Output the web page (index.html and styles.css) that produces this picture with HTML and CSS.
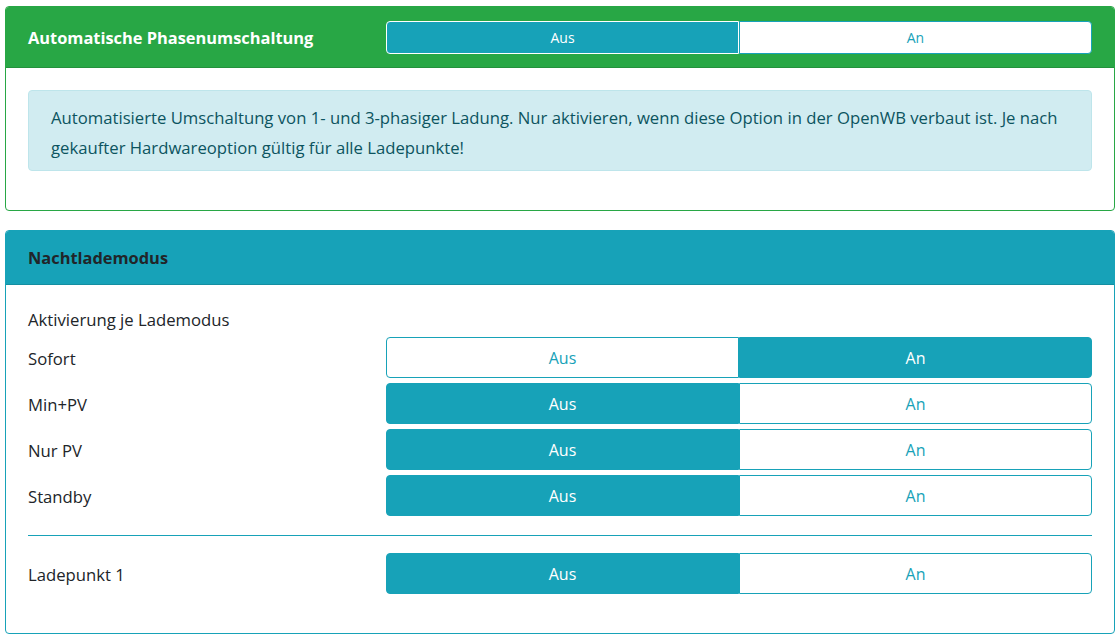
FILE: index.html
```html
<!DOCTYPE html>
<html lang="de">
<head>
    <meta charset="UTF-8">
    <meta name="viewport" content="width=device-width, initial-scale=1.0">
    <title>Ladeeinstellungen</title>
<link rel="stylesheet" href="styles.css">
</head>
<body>
    <div class="karte karte-gruen">
        <div class="kopf kopf-gruen">
            <div class="titel">Automatische Phasenumschaltung</div>
            <div class="schalter schalter-klein">
                <button class="aktiv">Aus</button>
                <button>An</button>
            </div>
        </div>
        <div class="inhalt">
            <div class="hinweis">
                Automatisierte Umschaltung von 1- und 3-phasiger Ladung. Nur aktivieren, wenn diese Option in der OpenWB verbaut ist. Je nach gekaufter Hardwareoption gültig für alle Ladepunkte!
            </div>
        </div>
    </div>

    <div class="karte karte-blau">
        <div class="kopf kopf-blau">
            <div class="titel">Nachtlademodus</div>
        </div>
        <div class="inhalt">
            <div class="untertitel">Aktivierung je Lademodus</div>
            <div class="zeile">
                <span>Sofort</span>
                <div class="schalter">
                    <button>Aus</button>
                    <button class="aktiv">An</button>
                </div>
            </div>
            <div class="zeile">
                <span>Min+PV</span>
                <div class="schalter">
                    <button class="aktiv">Aus</button>
                    <button>An</button>
                </div>
            </div>
            <div class="zeile">
                <span>Nur PV</span>
                <div class="schalter">
                    <button class="aktiv">Aus</button>
                    <button>An</button>
                </div>
            </div>
            <div class="zeile">
                <span>Standby</span>
                <div class="schalter">
                    <button class="aktiv">Aus</button>
                    <button>An</button>
                </div>
            </div>
            <hr>
            <div class="zeile">
                <span>Ladepunkt 1</span>
                <div class="schalter">
                    <button class="aktiv">Aus</button>
                    <button>An</button>
                </div>
            </div>
        </div>
    </div>
</body>
</html>
```

FILE: styles.css
```css
body {
    font-family: "Open Sans", Arial, sans-serif;
    font-size: 16.7px;
    color: #212529;
    background: white;
    margin: 0;
    padding: 6px 5px;
}

.karte {
    border: 1px solid;
    border-radius: 4px;
    margin-bottom: 19px;
    overflow: hidden;
}

.karte-gruen {
    border-color: #28a745;
}

.karte-blau {
    border-color: #17a2b8;
}

.kopf {
    display: grid;
    grid-template-columns: 358px 1fr;
    align-items: center;
    padding: 0 22px;
}

.kopf-gruen {
    background-color: #28a745;
    color: white;
    height: 60px;
    border-bottom: 1px solid #23913c;
}

.kopf-blau {
    background-color: #17a2b8;
    color: #212529;
    height: 53px;
    border-bottom: 1px solid #148ea1;
}

.titel {
    font-weight: bold;
    font-size: 16.4px;
}

.inhalt {
    padding: 22px;
}

.hinweis {
    background-color: #d1ecf1;
    border: 1px solid #bee5eb;
    color: #0c5460;
    border-radius: 4px;
    padding: 12px 20px 7px 22px;
    line-height: 30px;
    margin-bottom: 17px;
}

.untertitel {
    line-height: 26px;
    margin-bottom: 4px;
}

.zeile {
    display: grid;
    grid-template-columns: 358px 1fr;
    align-items: center;
    margin-bottom: 5px;
}

.zeile span {
    padding-top: 2px;
}

.zeile:last-child {
    margin-bottom: 17px;
}

.schalter {
    display: flex;
    height: 41px;
}

.schalter button {
    flex: 1;
    font-family: inherit;
    font-size: 16px;
    background: white;
    color: #17a2b8;
    border: 1px solid #17a2b8;
    margin: 0;
    padding: 0;
    cursor: pointer;
}

.schalter button:first-child {
    border-radius: 4px 0 0 4px;
}

.schalter button:last-child {
    border-radius: 0 4px 4px 0;
}

.schalter button.aktiv {
    background-color: #17a2b8;
    color: white;
}

.schalter-klein {
    height: 33px;
}

.schalter-klein button {
    font-size: 14px;
}

.schalter-klein button.aktiv {
    border-color: white;
}

hr {
    border: none;
    border-top: 1px solid #17a2b8;
    margin: 19px 0 17px 0;
}
```
